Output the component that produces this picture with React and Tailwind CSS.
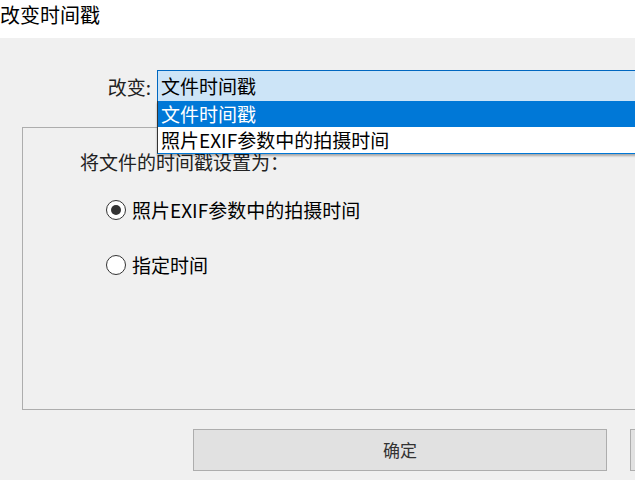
import { useState } from "react";

const font = { fontFamily: '"Noto Sans CJK SC", "Noto Sans", sans-serif' };

function Radio({ checked, label, onClick }) {
  return (
    <div className="flex items-center h-[24px] cursor-default" onClick={onClick}>
      <div className="w-[20px] h-[20px] rounded-full border border-[#333333] bg-white flex items-center justify-center shrink-0">
        {checked && <div className="w-[10px] h-[10px] rounded-full bg-[#333333]" />}
      </div>
      <span className="ml-[6px] text-[19px] leading-[20px] text-black">{label}</span>
    </div>
  );
}

export default function App() {
  const [mode, setMode] = useState("exif");
  const options = ["文件时间戳", "照片EXIF参数中的拍摄时间"];

  return (
    <div
      className="w-[635px] h-[480px] overflow-hidden bg-[#f0f0f0] flex flex-col"
      style={font}
    >
      <div className="h-[38px] shrink-0 bg-white pt-[5px] text-[20px] leading-[20px] text-black">
        改变时间戳
      </div>

      {/* combo row */}
      <div className="mt-[32px] flex shrink-0 h-[32px]">
        <div className="w-[157px] shrink-0 flex items-center justify-end pr-[6px] pt-[2px] text-[19px] text-[#222]">
          改变:
        </div>
        <div className="relative w-[520px] shrink-0 h-[32px] border border-[#0067c0] bg-[#cce4f7] pl-[3px] flex items-center text-[19px] text-black">
          {options[0]}
          <div className="absolute left-[-1px] top-[30px] w-[520px] bg-white border-l border-l-[#333] border-b-[1px] border-b-[#0078d7] border-r border-r-[#0078d7] shadow-[0_2px_2px_rgba(0,0,0,0.3)] z-10">
            <div className="h-[26px] bg-[#0078d7] text-white pl-[3px] flex items-center text-[19px]">
              {options[0]}
            </div>
            <div className="h-[26px] bg-white text-black pl-[3px] flex items-center text-[19px]">
              {options[1]}
            </div>
          </div>
        </div>
      </div>

      {/* group box */}
      <div className="mt-[25px] ml-[22px] w-[700px] h-[283px] shrink-0 border border-[#adadad] flex flex-col">
        <div className="mt-[24px] ml-[57px] text-[19px] leading-[20px] text-[#222]">
          将文件的时间戳设置为：
        </div>
        <div className="mt-[26px] ml-[83px]">
          <Radio
            checked={mode === "exif"}
            label="照片EXIF参数中的拍摄时间"
            onClick={() => setMode("exif")}
          />
        </div>
        <div className="mt-[31px] ml-[83px]">
          <Radio
            checked={mode === "custom"}
            label="指定时间"
            onClick={() => setMode("custom")}
          />
        </div>
      </div>

      {/* buttons */}
      <div className="mt-[19px] ml-[193px] flex gap-[23px] shrink-0">
        <button className="w-[414px] h-[42px] shrink-0 bg-[#e1e1e1] border border-[#adadad] text-[17px] text-[#333]">
          确定
        </button>
        <button className="w-[414px] h-[42px] shrink-0 bg-[#e1e1e1] border border-[#adadad]" />
      </div>
    </div>
  );
}
